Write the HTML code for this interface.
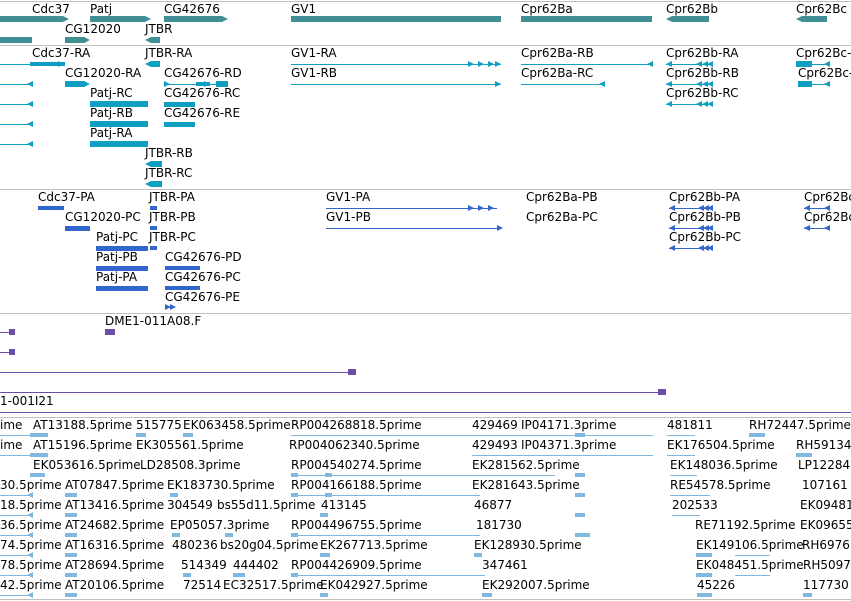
<!DOCTYPE html>
<html><head><meta charset="utf-8"><style>
html,body{margin:0;padding:0;background:#fff;width:851px;height:601px;overflow:hidden;position:relative;font-family:"DejaVu Sans","Liberation Sans",sans-serif;font-size:12px;color:#000}
.t{position:absolute;white-space:nowrap;line-height:13px}
.b{position:absolute}
.h{position:absolute;left:0;width:851px;height:1px}
</style></head><body>
<div id="r"></div>
<script>
var R=document.getElementById('r'),H='';
function T(x,y,s){H+='<div class="t" style="left:'+x+'px;top:'+y+'px">'+s+'</div>';}
function B(x1,x2,y,c,h){h=h||6;H+='<div class="b" style="left:'+x1+'px;top:'+(y-h/2)+'px;width:'+(x2-x1)+'px;height:'+h+'px;background:'+c+'"></div>';}
function L(x1,x2,y,c){B(x1,x2,y,c,1);}
function A(x,y,c,d){ if(d>0)H+='<div class="b" style="left:'+x+'px;top:'+(y-3)+'px;width:0;height:0;border-top:3.5px solid transparent;border-bottom:3.5px solid transparent;border-left:6px solid '+c+'"></div>';else H+='<div class="b" style="left:'+(x-6)+'px;top:'+(y-3)+'px;width:0;height:0;border-top:3.5px solid transparent;border-bottom:3.5px solid transparent;border-right:6px solid '+c+'"></div>';}
function G(y,c){H+='<div class="h" style="top:'+y+'px;background:'+c+'"></div>';}
var g='#418f94',tr='#0f9fc0',p='#3366cc',pu='#6b4ea8',e='#80b8e0',gr='#c0c0c0';
G(1,gr);G(45,gr);G(189,gr);G(313,gr);G(417,gr);G(599,gr);
G(412,pu);
T(32,3,'Cdc37');T(90,3,'Patj');T(164,3,'CG42676');T(291,3,'GV1');T(521,3,'Cpr62Ba');T(666,3,'Cpr62Bb');T(796,3,'Cpr62Bc');
B(0,63,19,g);A(63,19,g,1);B(90,145,19,g);A(145,19,g,1);B(164,222,19,g);A(222,19,g,1);B(291,501,19,g);B(521,652,19,g);B(672,709,19,g);A(672,19,g,-1);B(802,827,19,g);A(802,19,g,-1);
T(65,23,'CG12020');T(145,23,'JTBR');B(0,32,40,g);B(65,85,40,g);A(84,40,g,1);B(151,160,40,g);A(151,40,g,-1);
T(32,47,'Cdc37-RA');L(0,33,64,tr);B(30,65,64,tr,4);A(58,64,tr,1);T(145,47,'JTBR-RA');B(151,160,64,tr);A(151,64,tr,-1);
T(291,47,'GV1-RA');L(291,501,64,tr);A(468,64,tr,1);A(478,64,tr,1);A(488,64,tr,1);A(495,64,tr,1);
T(521,47,'Cpr62Ba-RB');L(521,653,64,tr);A(653,64,tr,-1);T(666,47,'Cpr62Bb-RA');L(666,713,64,tr);A(672,64,tr,-1);A(702,64,tr,-1);A(708,64,tr,-1);A(713,64,tr,-1);
T(796,47,'Cpr62Bc-');B(796,812,64,tr);L(812,830,64,tr);A(830,64,tr,-1);
T(65,67,'CG12020-RA');L(0,33,84,tr);A(33,84,tr,-1);B(65,85,84,tr);A(84,84,tr,1);
T(164,67,'CG42676-RD');L(164,228,84,tr);A(164,84,tr,1);B(196,210,84,tr,4);A(204,84,tr,1);B(216,228,84,tr);
T(291,67,'GV1-RB');L(291,501,84,tr);A(495,84,tr,1);T(521,67,'Cpr62Ba-RC');L(521,605,84,tr);A(605,84,tr,-1);
T(666,67,'Cpr62Bb-RB');L(666,713,84,tr);A(672,84,tr,-1);A(702,84,tr,-1);A(708,84,tr,-1);A(713,84,tr,-1);T(798,67,'Cpr62Bc-');B(798,812,84,tr);L(812,830,84,tr);A(830,84,tr,-1);
T(90,87,'Patj-RC');L(0,33,104,tr);A(33,104,tr,-1);B(90,148,104,tr);A(142,104,tr,1);T(164,87,'CG42676-RC');B(164,195,104,tr,5);T(666,87,'Cpr62Bb-RC');L(666,713,104,tr);A(672,104,tr,-1);A(702,104,tr,-1);A(708,104,tr,-1);A(713,104,tr,-1);
T(90,107,'Patj-RB');L(0,33,124,tr);A(33,124,tr,-1);B(90,148,124,tr);A(142,124,tr,1);T(164,107,'CG42676-RE');B(164,195,124,tr,5);
T(90,127,'Patj-RA');L(0,33,144,tr);A(33,144,tr,-1);B(90,148,144,tr);A(142,144,tr,1);
T(145,147,'JTBR-RB');B(151,162,164,tr);A(151,164,tr,-1);T(145,167,'JTBR-RC');B(151,162,184,tr);A(151,184,tr,-1);
T(38,191,'Cdc37-PA');B(38,64,208,p,4);T(149,191,'JTBR-PA');B(150,157,208,p,4);T(326,191,'GV1-PA');L(326,497,208,p);A(468,208,p,1);A(478,208,p,1);A(488,208,p,1);
T(526,191,'Cpr62Ba-PB');T(669,191,'Cpr62Bb-PA');L(669,713,208,p);A(675,208,p,-1);A(704,208,p,-1);A(709,208,p,-1);A(713,208,p,-1);T(804,191,'Cpr62Bc');L(804,830,208,p);A(810,208,p,-1);A(830,208,p,-1);
T(65,211,'CG12020-PC');B(65,90,228,p,5);T(149,211,'JTBR-PB');B(150,157,228,p,4);T(326,211,'GV1-PB');L(326,497,228,p);A(497,228,p,1);
T(526,211,'Cpr62Ba-PC');T(669,211,'Cpr62Bb-PB');L(669,713,228,p);A(675,228,p,-1);A(704,228,p,-1);A(709,228,p,-1);A(713,228,p,-1);T(804,211,'Cpr62Bc');L(804,830,228,p);A(810,228,p,-1);A(830,228,p,-1);
T(96,231,'Patj-PC');B(96,148,248,p,5);T(149,231,'JTBR-PC');B(150,157,248,p,4);T(669,231,'Cpr62Bb-PC');L(669,713,248,p);A(675,248,p,-1);A(704,248,p,-1);A(709,248,p,-1);A(713,248,p,-1);
T(96,251,'Patj-PB');B(96,148,268,p,5);T(165,251,'CG42676-PD');B(165,200,268,p,4);
T(96,271,'Patj-PA');B(96,148,288,p,5);T(165,271,'CG42676-PC');B(165,200,288,p,4);
T(165,291,'CG42676-PE');A(165,307,p,1);A(170,307,p,1);
T(105,315,'DME1-011A08.F');B(105,115,332,pu);L(0,10,332,pu);B(9,15,332,pu);L(0,10,352,pu);B(9,15,352,pu);
L(0,352,372,pu);B(348,356,372,pu);L(0,660,392,pu);B(658,666,392,pu);T(0,395,'1-001I21');
var rows=[
[[0,'ime'],[33,'AT13188.5prime'],[136,'515775'],[183,'EK063458.5prime'],[291,'RP004268818.5prime'],[472,'429469'],[521,'IP04171.3prime'],[667,'481811'],[749,'RH72447.5prime']],
[[0,'ime'],[33,'AT15196.5prime'],[136,'EK305561.5prime'],[289,'RP004062340.5prime'],[472,'429493'],[521,'IP04371.3prime'],[667,'EK176504.5prime'],[796,'RH59134']],
[[33,'EK053616.5prime'],[140,'LD28508.3prime'],[291,'RP004540274.5prime'],[472,'EK281562.5prime'],[670,'EK148036.5prime'],[798,'LP12284']],
[[0,'30.5prime'],[65,'AT07847.5prime'],[167,'EK183730.5prime'],[291,'RP004166188.5prime'],[472,'EK281643.5prime'],[670,'RE54578.5prime'],[802,'107161']],
[[0,'18.5prime'],[65,'AT13416.5prime'],[167,'304549'],[217,'bs55d11.5prime'],[321,'413145'],[474,'46877'],[672,'202533'],[800,'EK09481']],
[[0,'36.5prime'],[65,'AT24682.5prime'],[170,'EP05057.3prime'],[291,'RP004496755.5prime'],[476,'181730'],[695,'RE71192.5prime'],[800,'EK09655']],
[[0,'74.5prime'],[65,'AT16316.5prime'],[172,'480236'],[220,'bs20g04.5prime'],[320,'EK267713.5prime'],[474,'EK128930.5prime'],[696,'EK149106.5prime'],[802,'RH6976']],
[[0,'78.5prime'],[65,'AT28694.5prime'],[181,'514349'],[233,'444402'],[291,'RP004426909.5prime'],[482,'347461'],[696,'EK048451.5prime'],[803,'RH5097']],
[[0,'42.5prime'],[65,'AT20106.5prime'],[183,'72514'],[223,'EC32517.5prime'],[320,'EK042927.5prime'],[482,'EK292007.5prime'],[697,'45226'],[803,'117730']]];
rows.forEach(function(r,i){var y=419+20*i,ly=y+16;r.forEach(function(a){T(a[0],y,a[1]);});
 if(i<2){L(0,48,ly,e);B(30,48,ly,e,4);}else if(i>2){L(0,33,ly,e);A(33,ly,e,-1);B(65,77,ly,e,4);}
 else{B(30,45,ly,e,4);}
});
[[291,475,435],[472,653,435],[667,695,435],[472,653,455],[667,695,455],[291,480,475],[472,555,475],[670,697,475],[291,480,495],[670,710,495],[672,700,515],[291,480,535],[291,485,575],[735,770,555],[735,770,575]].forEach(function(a){L(a[0],a[1],a[2],e);});
[[136,146,435],[183,193,435],[749,765,435],[796,812,455],[170,178,495],[172,180,535],[225,233,535],[320,330,555],[474,482,555],[696,712,555],[696,712,575],[183,191,575],[233,245,575],[482,492,595],[697,712,595],[803,812,595],[65,77,595],[291,298,475],[325,332,475],[575,585,435],[291,298,495],[325,332,495],[575,585,495],[320,328,515],[575,585,515],[291,298,535],[575,590,535],[291,298,575],[320,328,595],[575,585,475]].forEach(function(a){B(a[0],a[1],a[2],e,4);});
R.innerHTML=H;
</script>
</body></html>
